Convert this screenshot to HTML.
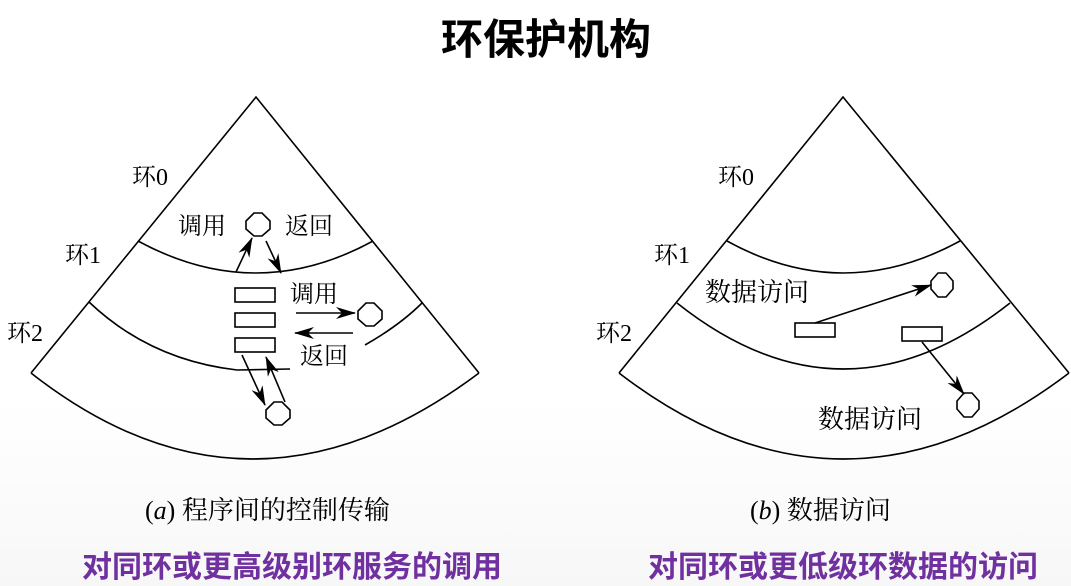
<!DOCTYPE html>
<html><head><meta charset="utf-8"><style>
html,body{margin:0;padding:0;}
body{width:1071px;height:586px;overflow:hidden;background:linear-gradient(#fff 0,#fff 400px,#f7f7f7 586px);}
svg{display:block}
text{font-family:"Liberation Serif","Noto Serif CJK SC",serif;fill:#000}
.t{font-family:"Liberation Sans","Noto Sans CJK SC",sans-serif;font-weight:bold}
</style></head><body>
<svg width="1071" height="586" viewBox="0 0 1071 586">
<defs>
<marker id="ah2" markerWidth="20" markerHeight="12" refX="19" refY="6" orient="auto" markerUnits="userSpaceOnUse"><path d="M0,0 L20,6 L0,12 L6,6 Z" fill="#000"/></marker></defs>
<text x="546" y="54" text-anchor="middle" class="t" font-size="42">环保护机构</text>
<g fill="none" stroke="#000" stroke-width="1.6">
<path d="M31,373 L256,97 L479,373"/>
<path d="M31,373 Q250,545 479,373"/>
<path d="M138,241 Q256,305 373,241"/>
<path d="M89,302 Q150,360 237,370 L290,369"/>
<path d="M365,345 Q400,325 422,303"/>
<rect x="235" y="288" width="40" height="14"/>
<rect x="235" y="313" width="40" height="14"/>
<rect x="235" y="338" width="40" height="14"/>
<polygon points="254,213 262,213 270,221 270,229 262,236 254,236 246,229 246,221"/>
<polygon points="366,303 374,303 382,311 382,319 374,326 366,326 358,319 358,311"/>
<polygon points="274,402 282,402 290,410 290,418 282,425 274,425 266,418 266,410"/>
<path d="M236,272 L252,238" marker-end="url(#ah2)"/>
<path d="M266,241 L281,273" marker-end="url(#ah2)"/>
<path d="M296,313 L355,313" marker-end="url(#ah2)"/>
<path d="M353,333 L295,333" marker-end="url(#ah2)"/>
<path d="M242,355 L265,405" marker-end="url(#ah2)"/>
<path d="M285,402 L266,357" marker-end="url(#ah2)"/>

<path d="M619,373 L843,97 L1069,373"/>
<path d="M619,373 Q843,545 1069,373"/>
<path d="M727,241 Q843,305 960,241"/>
<path d="M677,303 Q843,435 1010,303"/>
<rect x="795" y="323" width="40" height="14"/>
<rect x="902" y="327" width="40" height="14"/>
<polygon points="938,273 946,273 953,281 953,289 946,297 938,297 931,289 931,281"/>
<polygon points="964,393 972,393 979,401 979,409 972,417 964,417 957,409 957,401"/>
<path d="M815,323 L931,285" marker-end="url(#ah2)"/>
<path d="M922,342 L964,394" marker-end="url(#ah2)"/>
</g>
<g font-size="24">
<text x="132" y="185">环0</text>
<text x="178" y="234">调用</text>
<text x="285" y="234">返回</text>
<text x="65" y="263">环1</text>
<text x="290" y="302">调用</text>
<text x="7" y="341">环2</text>
<text x="300" y="364">返回</text>
<text x="718" y="185">环0</text>
<text x="654" y="263">环1</text>
<text x="596" y="341">环2</text>
<text x="705" y="301" font-size="26">数据访问</text>
<text x="818" y="428" font-size="26">数据访问</text>
<text x="145" y="519" font-size="26">(<tspan font-style="italic">a</tspan>) 程序间的控制传输</text>
<text x="750" y="519" font-size="26">(<tspan font-style="italic">b</tspan>) 数据访问</text>
</g>
<text x="82" y="577" class="t" font-size="30" style="fill:#7030a0">对同环或更高级别环服务的调用</text>
<text x="648" y="577" class="t" font-size="30" style="fill:#7030a0">对同环或更低级环数据的访问</text>
</svg>
</body></html>
